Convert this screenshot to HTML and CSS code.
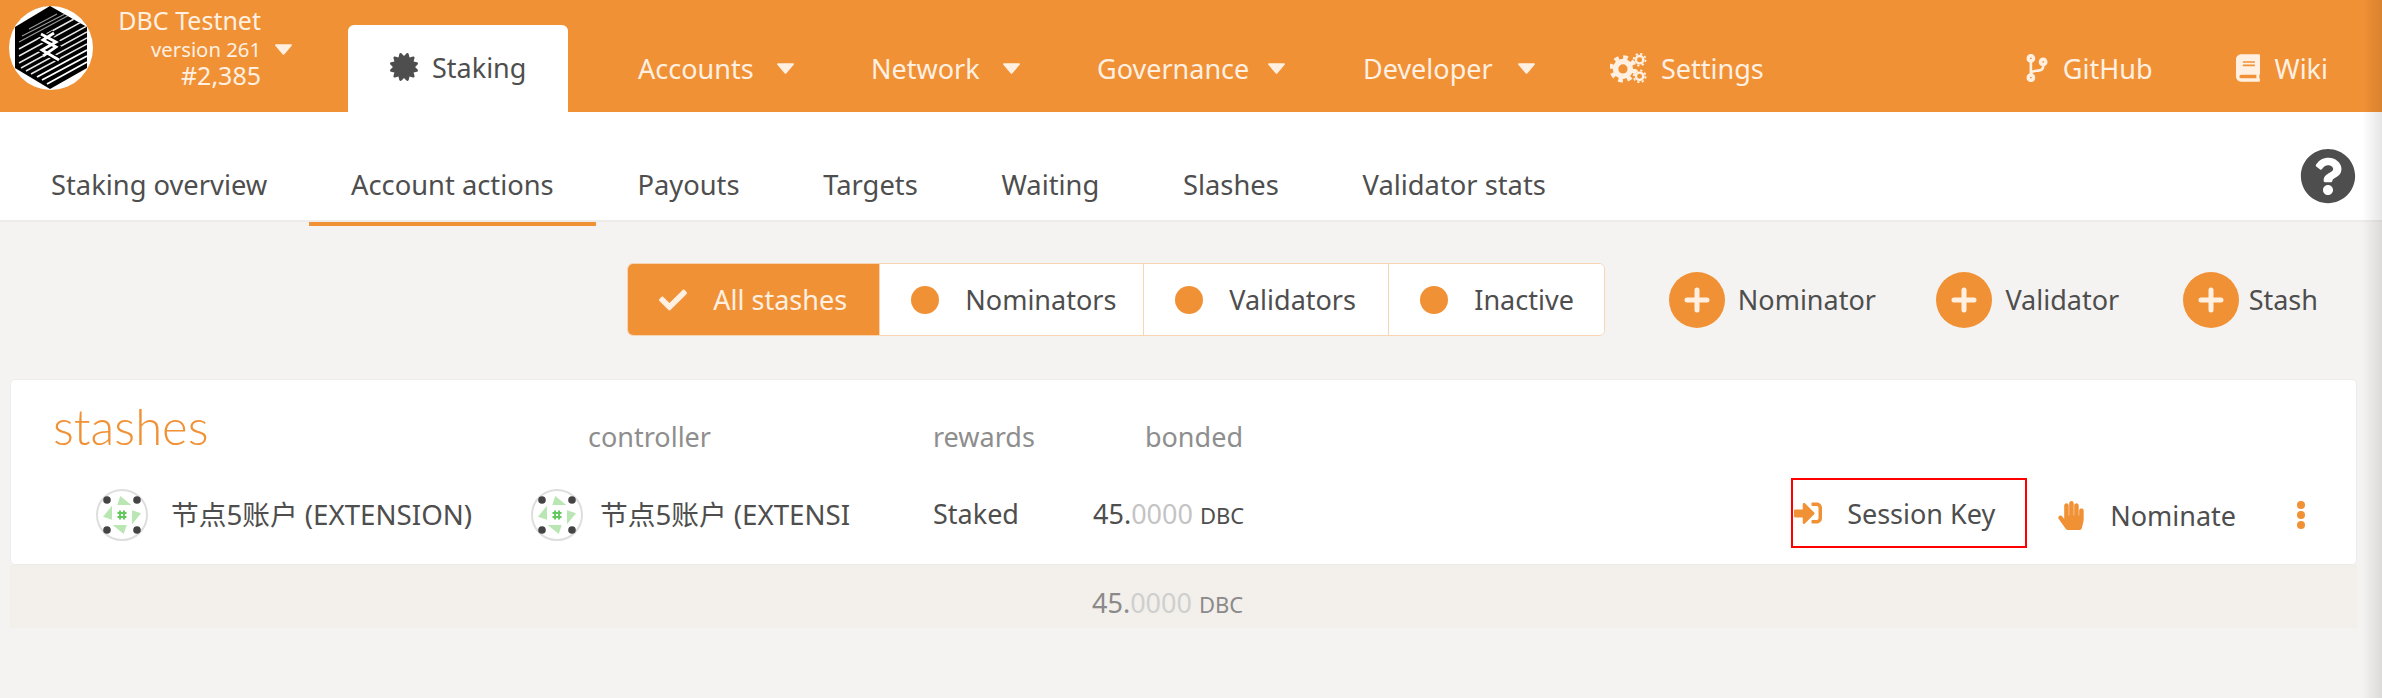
FILE: index.html
```html
<!DOCTYPE html>
<html lang="en">
<head>
<meta charset="utf-8">
<title>Staking</title>
<link rel="stylesheet" href="styles.css">
</head>
<body>
<svg class="defs" width="0" height="0" aria-hidden="true">
  <defs>
    <clipPath id="hex-clip"><path d="M41 0L78 21V62L41 83L6 62V21Z"/></clipPath>
    <symbol id="i-cert" viewBox="0 0 512 512"><path d="M458.622 255.92l45.985-45.005c13.708-12.977 7.316-36.039-10.664-40.339l-62.65-15.99 17.661-62.015c4.991-17.838-11.829-34.663-29.661-29.671l-61.994 17.667-15.984-62.671C337.085.197 313.765-6.276 300.99 7.228L256 53.57 211.011 7.229c-12.63-13.351-36.047-7.234-40.325 10.668l-15.984 62.671-61.995-17.667C74.87 57.907 58.056 74.738 63.046 92.572l17.661 62.015-62.65 15.99C.069 174.878-6.31 197.944 7.392 210.915l45.985 45.005-45.985 45.004c-13.708 12.977-7.316 36.039 10.664 40.339l62.65 15.99-17.661 62.015c-4.991 17.838 11.829 34.663 29.661 29.671l61.994-17.667 15.984 62.671c4.439 18.575 27.696 24.018 40.325 10.668L256 458.61l44.989 46.001c12.5 13.488 35.987 7.486 40.325-10.668l15.984-62.671 61.994 17.667c17.836 4.994 34.651-11.837 29.661-29.671l-17.661-62.015 62.65-15.99c17.987-4.302 24.366-27.367 10.664-40.339l-45.984-45.004z"/></symbol>
    <symbol id="i-caret" viewBox="0 0 16 10"><path d="M1 0h14c.8 0 1.2.9.7 1.5L8.7 9.6c-.4.5-1 .5-1.4 0L.3 1.5C-.2.9.2 0 1 0z"/></symbol>
    <symbol id="i-plus" viewBox="0 0 56 56"><path d="M28 18v20M18 28h20" fill="none" stroke="#fff0e2" stroke-width="5" stroke-linecap="round"/></symbol>
    <symbol id="i-identicon" viewBox="0 0 52 52">
      <circle cx="26" cy="26" r="25" fill="#fff" stroke="#dedede" stroke-width="2"/>
      <circle cx="11" cy="11" r="3.8" fill="#444"/><circle cx="41" cy="11" r="3.8" fill="#444"/>
      <circle cx="11" cy="41" r="3.8" fill="#444"/><circle cx="41" cy="41" r="3.8" fill="#444"/>
      <path d="M24.3 7L35.3 16L21.3 16Z M45 24.3L36 35.3L36 21.3Z M27.7 45L16.7 36L30.7 36Z M7 27.7L16 16.7L16 30.7Z" fill="#b9e6b3"/>
      <path d="M24 21.5v9M28 21.5v9M21.5 24h9M21.5 28h9" stroke="#63c95c" stroke-width="1.9" fill="none"/>
    </symbol>
  </defs>
</svg>

<header class="topbar">
  <div class="brand">
    <svg class="logo" viewBox="0 0 84 84" aria-hidden="true">
      <circle cx="42" cy="42" r="42" fill="#fff"/>
      <path d="M41 0L78 21V62L41 83L6 62V21Z" fill="#000"/>
      <g clip-path="url(#hex-clip)" fill="none">
        <g stroke="#9a9a9a" stroke-width="1.1">
          <path d="M20 23L48 8M13 30L56 8"/>
          <path d="M10 36L64 7"/>
        </g>
        <g stroke="#e6e6e6" stroke-width="1.5">
          <path d="M10 43L76 7M10 50L78 13M10 57L78 20M12 62L78 26"/>
          <path d="M17 65L78 32M22 68L78 38"/>
        </g>
        <g stroke="#fff" stroke-width="1.9">
          <path d="M28 71L78 44M33 74L78 50M38 78L78 56"/>
        </g>
      </g>
      <path d="M32 28L47 36L33 44L50 54M45 27L34 34L47 41L34 50" stroke="#000" stroke-width="6" fill="none"/>
      <path d="M32 28L47 36L33 44L50 54M45 27L34 34L47 41L34 50" stroke="#fff" stroke-width="2.8" fill="none"/>
    </svg>
    <div class="chain">
      <div class="chain-name">DBC Testnet</div>
      <div class="chain-version">version 261</div>
      <div class="chain-block">#2,385</div>
    </div>
    <svg class="caret caret-brand"><use href="#i-caret"/></svg>
  </div>
  <nav class="mainnav">
    <a class="tab-active"><svg class="tab-icon"><use href="#i-cert"/></svg>Staking</a>
    <a class="nav-item nav-accounts">Accounts<svg class="caret"><use href="#i-caret"/></svg></a>
    <a class="nav-item nav-network">Network<svg class="caret"><use href="#i-caret"/></svg></a>
    <a class="nav-item nav-governance">Governance<svg class="caret"><use href="#i-caret"/></svg></a>
    <a class="nav-item nav-developer">Developer<svg class="caret"><use href="#i-caret"/></svg></a>
    <a class="nav-item nav-settings">
      <svg class="cogs" viewBox="0 0 40 32" aria-hidden="true">
        <circle cx="14" cy="17" r="8" fill="none" stroke="#fff0e2" stroke-width="6"/>
        <circle cx="14" cy="17" r="12.5" fill="none" stroke="#fff0e2" stroke-width="4.5" stroke-dasharray="5 4.8"/>
        <circle cx="32" cy="7" r="4" fill="none" stroke="#fff0e2" stroke-width="2.6"/>
        <circle cx="32" cy="7" r="6.4" fill="none" stroke="#fff0e2" stroke-width="2" stroke-dasharray="2.4 2.6"/>
        <circle cx="32" cy="25" r="4" fill="none" stroke="#fff0e2" stroke-width="2.6"/>
        <circle cx="32" cy="25" r="6.4" fill="none" stroke="#fff0e2" stroke-width="2" stroke-dasharray="2.4 2.6"/>
      </svg>Settings</a>
  </nav>
  <div class="extnav">
    <a class="ext-item ext-github"><svg class="ext-icon" viewBox="0 0 384 512"><path d="M384 144c0-44.2-35.8-80-80-80s-80 35.8-80 80c0 36.4 24.3 67.1 57.5 76.8-.6 16.1-4.2 28.5-11 36.9-15.4 19.2-49.3 22.4-85.2 25.7-28.2 2.6-57.4 5.4-81.3 16.9v-144c32.5-10.2 56-40.5 56-76.3 0-44.2-35.8-80-80-80S0 35.8 0 80c0 35.8 23.5 66.1 56 76.3v199.3C23.5 365.9 0 396.2 0 432c0 44.2 35.8 80 80 80s80-35.8 80-80c0-34-21.2-63.1-51.2-74.6 3.1-5.2 7.8-9.8 14.9-13.4 16.2-8.2 40.4-10.4 66.1-12.8 42.2-3.9 90-8.4 118.2-43.4 14-17.4 21.1-39.8 21.6-67.9 31.6-10.8 54.4-40.7 54.4-75.9zM80 64c8.8 0 16 7.2 16 16s-7.2 16-16 16-16-7.2-16-16 7.2-16 16-16zm0 384c-8.8 0-16-7.2-16-16s7.2-16 16-16 16 7.2 16 16-7.2 16-16 16zm224-320c8.8 0 16 7.2 16 16s-7.2 16-16 16-16-7.2-16-16 7.2-16 16-16z"/></svg>GitHub</a>
    <a class="ext-item"><svg class="ext-icon ext-book" viewBox="0 0 448 512"><path d="M448 360V24c0-13.3-10.7-24-24-24H96C43 0 0 43 0 96v320c0 53 43 96 96 96h328c13.3 0 24-10.7 24-24v-16c0-7.5-3.5-14.3-8.9-18.7-4.2-15.4-4.2-59.3 0-74.7 5.4-4.3 8.9-11.1 8.9-18.6zM128 134c0-3.3 2.7-6 6-6h212c3.3 0 6 2.7 6 6v20c0 3.3-2.7 6-6 6H134c-3.3 0-6-2.7-6-6v-20zm0 64c0-3.3 2.7-6 6-6h212c3.3 0 6 2.7 6 6v20c0 3.3-2.7 6-6 6H134c-3.3 0-6-2.7-6-6v-20zm253.4 250H96c-17.7 0-32-14.3-32-32 0-17.6 14.4-32 32-32h285.4c-1.9 17.1-1.9 46.9 0 64z"/></svg>Wiki</a>
  </div>
</header>

<div class="subnav">
  <a class="sub-item">Staking overview</a>
  <a class="sub-item sub-active">Account actions</a>
  <a class="sub-item">Payouts</a>
  <a class="sub-item">Targets</a>
  <a class="sub-item">Waiting</a>
  <a class="sub-item">Slashes</a>
  <a class="sub-item">Validator stats</a>
  <svg class="help" viewBox="0 0 512 512" aria-hidden="true"><path d="M504 256c0 136.997-111.043 248-248 248S8 392.997 8 256C8 119.083 119.043 8 256 8s248 111.083 248 248zM262.655 90c-54.497 0-89.255 22.957-116.549 63.758-3.536 5.286-2.353 12.415 2.715 16.258l34.699 26.31c5.205 3.947 12.621 3.008 16.665-2.122 17.864-22.658 30.113-35.797 57.303-35.797 20.429 0 45.698 13.148 45.698 32.958 0 14.976-12.363 22.667-32.534 33.976C247.128 238.528 216 254.941 216 296v4c0 6.627 5.373 12 12 12h56c6.627 0 12-5.373 12-12v-1.333c0-28.462 83.186-29.647 83.186-106.667 0-58.002-60.165-102-116.531-102zM256 338c-25.365 0-46 20.635-46 46 0 25.364 20.635 46 46 46s46-20.636 46-46c0-25.365-20.635-46-46-46z"/></svg>
</div>

<main class="content">
  <div class="toolbar">
    <div class="filter">
      <button class="seg seg-on seg-all"><svg class="seg-check" viewBox="0 0 512 512"><path d="M173.898 439.404l-166.4-166.4c-9.997-9.997-9.997-26.206 0-36.204l36.203-36.204c9.997-9.998 26.207-9.998 36.204 0L192 312.69 432.095 72.596c9.997-9.997 26.207-9.997 36.204 0l36.203 36.204c9.997 9.997 9.997 26.206 0 36.204l-294.4 294.401c-9.998 9.997-26.207 9.997-36.204-.001z"/></svg>All stashes</button>
      <button class="seg seg-nom"><span class="seg-dot"></span>Nominators</button>
      <button class="seg seg-val"><span class="seg-dot"></span>Validators</button>
      <button class="seg seg-ina"><span class="seg-dot"></span>Inactive</button>
    </div>
    <a class="add add-nom"><svg class="add-icon"><use href="#i-plus"/></svg>Nominator</a>
    <a class="add add-val"><svg class="add-icon"><use href="#i-plus"/></svg>Validator</a>
    <a class="add add-sta"><svg class="add-icon"><use href="#i-plus"/></svg>Stash</a>
  </div>

  <section class="card">
    <div class="grid grid-head">
      <h1 class="title">stashes</h1>
      <div class="th th-controller">controller</div>
      <div class="th">rewards</div>
      <div class="th th-bonded">bonded</div>
    </div>
    <div class="grid grid-row">
      <div class="account account-stash"><svg class="identicon"><use href="#i-identicon"/></svg><span class="account-name">节点5账户 (EXTENSION)</span></div>
      <div class="account"><svg class="identicon"><use href="#i-identicon"/></svg><span class="account-name account-clip">节点5账户 (EXTENSION)</span></div>
      <div class="cell cell-raised">Staked</div>
      <div class="cell cell-amount cell-raised">45.<span class="frac">0000</span> <span class="unit">DBC</span></div>
      <div class="actions">
        <a class="action action-session"><svg class="action-icon action-signin" viewBox="0 0 512 512"><path d="M416 448h-84c-6.6 0-12-5.4-12-12v-40c0-6.6 5.4-12 12-12h84c17.7 0 32-14.3 32-32V160c0-17.7-14.3-32-32-32h-84c-6.6 0-12-5.4-12-12V76c0-6.6 5.4-12 12-12h84c53 0 96 43 96 96v192c0 53-43 96-96 96zm-47-201L201 79c-15-15-41-4.5-41 17v96H24c-13.3 0-24 10.7-24 24v96c0 13.3 10.7 24 24 24h136v96c0 21.5 26 32 41 17l168-168c9.3-9.4 9.3-24.6 0-34z"/></svg>Session Key</a>
        <a class="action action-nominate"><svg class="action-icon action-hand" viewBox="0 0 448 512"><path d="M408.781 128.007C386.356 127.578 368 146.36 368 168.79V256h-8V79.79c0-22.43-18.356-41.212-40.781-40.783C297.488 39.423 280 57.169 280 79v177h-8V40.79C272 18.36 253.644-.422 231.219.007 209.488.423 192 18.169 192 40v216h-8V80.79c0-22.43-18.356-41.212-40.781-40.783C121.488 40.423 104 58.169 104 80v235.992l-31.648-43.519c-12.993-17.866-38.009-21.817-55.877-8.823-17.865 12.994-21.815 38.01-8.822 55.877l125.601 172.705A48 48 0 0 0 172.073 512h197.59c22.274 0 41.622-15.324 46.724-37.006l26.508-112.66a192.011 192.011 0 0 0 5.104-43.975V168c.001-22.43-18.356-41.212-40.781-40.782z"/></svg>Nominate</a>
        <span class="more"><i></i><i></i><i></i></span>
      </div>
    </div>
  </section>
  <div class="grid grid-foot">
    <div></div><div></div><div></div>
    <div class="cell cell-amount">45.<span class="frac">0000</span> <span class="unit">DBC</span></div>
  </div>
</main>
<div class="edge-shadow"></div>
</body>
</html>
```
FILE: styles.css
```css
* { box-sizing: border-box; }
html, body { margin: 0; height: 100%; }
body {
  position: relative;
  overflow: hidden;
  background: #f4f3f1;
  color: #4e4e4e;
  font-family: "Noto Sans", "Noto Sans CJK SC", sans-serif;
  font-size: 27px;
}
.defs { position: absolute; }
a { color: inherit; text-decoration: none; }

.topbar {
  display: flex;
  align-items: stretch;
  height: 112px;
  background: #f19135;
  color: #fff0e2;
  fill: #fff0e2;
}
.brand { display: flex; width: 348px; padding: 6px 0 0 9px; flex: none; }
.logo { width: 84px; height: 84px; flex: none; }
.chain { width: 168px; text-align: right; line-height: 1; }
.chain-name { margin-top: 1px; font-size: 25px; line-height: 26px; }
.chain-version { margin-top: 3px; font-size: 20.3px; line-height: 26px; }
.chain-block { font-size: 25px; line-height: 27px; }
.caret { width: 17px; height: 11px; flex: none; }
.caret-brand { margin: 38px 0 0 14px; }

.mainnav { display: flex; align-items: stretch; flex: none; }
.tab-active {
  display: flex;
  align-items: center;
  gap: 14px;
  width: 220px;
  margin-top: 25px;
  padding: 0 0 3px 42px;
  background: #fff;
  border-radius: 6px 6px 0 0;
  color: #4e4e4e;
  fill: #4e4e4e;
}
.tab-icon { width: 28px; height: 28px; }
.nav-item {
  display: flex;
  align-items: center;
  padding-top: 24px;
}
.nav-item .caret { margin-left: 23px; }
.nav-accounts { margin-left: 70px; width: 233px; }
.nav-network { width: 226px; }
.nav-governance { width: 266px; }
.nav-governance .caret { margin-left: 19px; }
.nav-developer { width: 247px; }
.nav-developer .caret { margin-left: 25px; }
.nav-settings { gap: 14px; }
.cogs { width: 37px; height: 30px; }

.extnav { display: flex; margin-left: auto; padding-right: 54px; align-items: center; padding-top: 24px; }
.ext-item { display: flex; align-items: center; gap: 15px; }
.ext-github { margin-right: 83px; }
.ext-icon { width: 22px; height: 28px; }
.ext-book { width: 24px; }

.subnav {
  position: relative;
  display: flex;
  align-items: flex-start;
  height: 110px;
  background: #fff;
  border-bottom: 2px solid #eeecea;
}
.sub-item {
  display: flex;
  align-items: center;
  height: 114px;
  padding: 34px 41.9px 0;
  border-bottom: 4px solid transparent;
  font-size: 27.3px;
}
.sub-item:first-child { padding-left: 51px; }
.sub-active { border-bottom-color: #f19135; }
.help {
  position: absolute;
  top: 36px;
  right: 26px;
  width: 56px;
  height: 56px;
  fill: #4e4e4e;
}

.content { padding-top: 41px; }
.toolbar {
  display: flex;
  align-items: center;
  justify-content: flex-end;
  height: 73px;
  padding-right: 64px;
}
.filter {
  display: flex;
  height: 73px;
  margin-right: 63.5px;
  border: 1px solid #f7d4b2;
  border-radius: 6px;
  overflow: hidden;
  background: #fff;
}
.seg {
  display: flex;
  align-items: center;
  gap: 26px;
  height: 100%;
  padding: 0 0 0 31px;
  border: 0;
  border-left: 1px solid #f7d4b2;
  background: #fff;
  color: #4e4e4e;
  font: inherit;
}
.seg-all { width: 251px; border-left: 0; }
.seg-nom { width: 264px; }
.seg-val { width: 245px; }
.seg-ina { width: 216px; }
.seg-on { background: #f19135; color: #fff0e2; fill: #fff0e2; }
.seg-check { width: 28px; height: 28px; }
.seg-dot { width: 28px; height: 28px; border-radius: 50%; background: #f19135; flex: none; }
.add { display: flex; align-items: center; gap: 13px; }
.add-nom { margin-right: 60.5px; }
.add-val { margin-right: 63.5px; }
.add-sta { gap: 10px; }
.add-icon { width: 56px; height: 56px; border-radius: 50%; background: #f19135; }

.card {
  width: 2347px;
  margin: 43px 0 0 10px;
  background: #fff;
  border: 1px solid #eeecea;
  border-radius: 5px;
}
.grid { display: grid; grid-template-columns: 510px 402px 160px 170px 1fr; align-items: center; }
.grid-head { height: 98px; }
.title {
  margin: 0;
  padding: 0 0 6px 42px;
  color: #f19135;
  font-size: 49px;
  font-weight: 300;
  font-family: "Lato", sans-serif;
  line-height: 1;
}
.th { padding: 14px 10px 0; color: #8e8e8e; }
.th-controller { padding-left: 67px; }
.th-bonded { text-align: right; }
.grid-row { height: 86px; padding-bottom: 16px; }
.account { display: flex; align-items: center; gap: 17px; min-width: 0; padding-left: 10px; }
.account-stash { padding-left: 85px; gap: 23px; }
.identicon { width: 52px; height: 52px; flex: none; }
.account-name { margin-bottom: 4px; white-space: nowrap; font-size: 27.7px; }
.account-clip { width: 250px; overflow: hidden; }
.cell { padding: 0 10px; white-space: nowrap; }
.cell-raised { margin-bottom: 3px; }
.cell-amount { text-align: right; }
.frac { color: #c4c4c4; }
.unit { font-size: 22px; }
.actions { display: flex; align-items: center; justify-content: flex-end; padding-right: 51px; }
.action { display: flex; align-items: center; fill: #f19135; }
.action-session {
  width: 236px;
  height: 70px;
  margin-right: 31px;
  margin-bottom: 4px;
  padding-left: 1px;
  gap: 25px;
  border: 2px solid #f00;
}
.action-signin { width: 28px; height: 28px; }
.action-hand { width: 26px; height: 29px; }
.action-nominate { gap: 26px; margin-right: 61px; }
.more { display: flex; flex-direction: column; gap: 2px; }
.more i { display: block; width: 8px; height: 8px; border-radius: 50%; background: #f19135; }

.grid-foot {
  width: 2347px;
  height: 63px;
  margin-left: 10px;
  padding-top: 11px;
  background: #f3efeb;
  color: #8a8a8a;
}
.grid-foot .frac { color: #cfcfcf; }

.edge-shadow {
  position: absolute;
  top: 0;
  right: 0;
  bottom: 0;
  width: 20px;
  background: linear-gradient(to right, rgba(0,0,0,0), rgba(0,0,0,.1));
  pointer-events: none;
}
```
